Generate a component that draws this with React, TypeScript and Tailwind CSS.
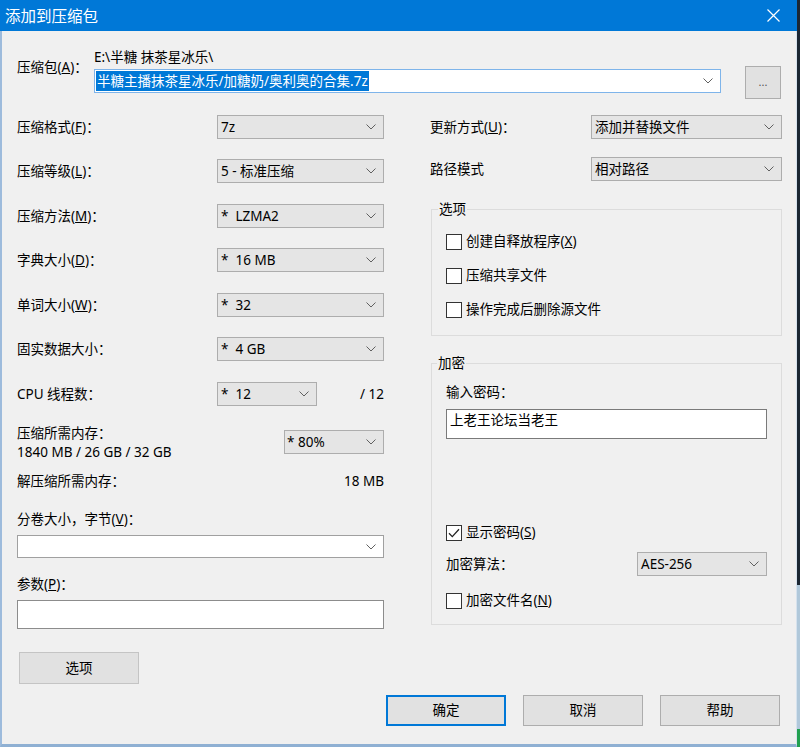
import React from "react";

function Chevron() {
  return (
    <svg width="10" height="6" viewBox="0 0 10 6" className="shrink-0">
      <path d="M0.5 0.5 L5 5 L9.5 0.5" fill="none" stroke="#606060" strokeWidth="1" />
    </svg>
  );
}

function Select({ value, star, className }: { value: string; star?: boolean; className: string }) {
  return (
    <div
      className={`flex h-[24px] items-center justify-between border border-[#adadad] bg-[#e5e5e5] pl-[3px] pr-[7px] ${className}`}
    >
      <span className="whitespace-pre leading-[19px]">
        {star && <span className="mr-[7px]">*</span>}
        {value}
      </span>
      <Chevron />
    </div>
  );
}

function Check({ checked }: { checked?: boolean }) {
  return (
    <div className="flex h-[16px] w-[16px] shrink-0 items-center justify-center border border-[#333] bg-white">
      {checked && (
        <svg width="14" height="14" viewBox="0 0 14 14">
          <path d="M2 7.2 L5.3 10.6 L12 3.2" fill="none" stroke="#222" strokeWidth="1.3" />
        </svg>
      )}
    </div>
  );
}

function Btn({ label, primary, className }: { label: string; primary?: boolean; className?: string }) {
  return (
    <div
      className={`flex h-[31px] w-[120px] items-center justify-center bg-[#e1e1e1] ${
        primary ? "border-2 border-[#0078d7]" : "border border-[#adadad]"
      } ${className ?? ""}`}
    >
      {label}
    </div>
  );
}

const leftRows = [
  { label: "压缩格式(", key: "F", tail: ")：", value: "7z", star: false, mt: "mt-0" },
  { label: "压缩等级(", key: "L", tail: ")：", value: "5 - 标准压缩", star: false, mt: "mt-[20px]" },
  { label: "压缩方法(", key: "M", tail: ")：", value: "LZMA2", star: true, mt: "mt-[21px]" },
  { label: "字典大小(", key: "D", tail: ")：", value: "16 MB", star: true, mt: "mt-[20px]" },
  { label: "单词大小(", key: "W", tail: ")：", value: "32", star: true, mt: "mt-[21px]" },
  { label: "固实数据大小：", key: "", tail: "", value: "4 GB", star: true, mt: "mt-[20px]" },
];

export default function App() {
  return (
    <div className="flex h-[747px] w-[800px] overflow-hidden bg-[#1b2530] font-['Noto_Sans','Noto_Sans_CJK_SC',sans-serif] text-[13.5px] text-black">
      {/* Dialog */}
      <div className="flex w-[797px] flex-col bg-[#f0f0f0]">
        {/* Title bar */}
        <div className="flex h-[31px] shrink-0 items-center justify-between bg-[#0078d7] pl-[5px] pr-[17px] text-white">
          <span className="text-[15.5px] leading-[20px]">添加到压缩包</span>
          <svg width="13" height="13" viewBox="0 0 13 13">
            <path d="M0.5 0.5 L12.5 12.5 M12.5 0.5 L0.5 12.5" stroke="#fff" strokeWidth="1.2" />
          </svg>
        </div>

        {/* Body */}
        <div className="flex flex-1 flex-col border-b-[3px] border-l-2 border-r border-b-[#8fb0d3] border-l-[#9dbbdc] border-r-[#d6e2ee] pl-[15px] pt-[18px]">
          {/* Archive path */}
          <div className="flex items-start">
            <div className="mt-[10px] w-[77px] leading-[16px]">
              压缩包(<span className="underline">A</span>)：
            </div>
            <div className="flex w-[627px] flex-col">
              <div className="h-[16px] leading-[16px]">E:\半糖 抹茶星冰乐\</div>
              <div className="mt-[4px] flex h-[24px] items-center justify-between border border-[#7eb4ea] bg-white pl-[1px] pr-[7px]">
                <span className="bg-[#0078d7] px-[1px] leading-[20px] text-white">
                  半糖主播抹茶星冰乐/加糖奶/奥利奥的合集.7z
                </span>
                <Chevron />
              </div>
            </div>
            <div className="ml-[24px] mt-[17px] flex h-[33px] w-[36px] items-center justify-center border border-[#adadad] bg-[#e1e1e1] text-[11px] text-[#555]">
              ...
            </div>
          </div>

          {/* Two columns */}
          <div className="mt-[16px] flex">
            {/* Left column */}
            <div className="flex w-[367px] flex-col">
              {leftRows.map((r) => (
                <div key={r.label} className={`flex h-[24px] items-center ${r.mt}`}>
                  <div className="w-[200px] leading-[19px]">
                    {r.label}
                    {r.key && <span className="underline">{r.key}</span>}
                    {r.tail}
                  </div>
                  <Select value={r.value} star={r.star} className="w-[167px]" />
                </div>
              ))}
              <div className="mt-[21px] flex h-[24px] items-center">
                <div className="w-[200px] leading-[19px]">CPU 线程数：</div>
                <Select value="12" star className="w-[100px]" />
                <div className="flex-1 text-right leading-[19px]">/ 12</div>
              </div>

              <div className="mt-[18px] flex">
                <div className="flex flex-1 flex-col leading-[19px]">
                  <div>压缩所需内存：</div>
                  <div>1840 MB / 26 GB / 32 GB</div>
                </div>
                <div className="mt-[6px] flex h-[24px] w-[100px] items-center justify-between border border-[#adadad] bg-[#e5e5e5] pl-[2px] pr-[7px]">
                  <span className="leading-[19px]">* 80%</span>
                  <Chevron />
                </div>
              </div>

              <div className="mt-[10px] flex justify-between leading-[19px]">
                <span>解压缩所需内存：</span>
                <span>18 MB</span>
              </div>

              <div className="mt-[19px] leading-[19px]">
                分卷大小，字节(<span className="underline">V</span>)：
              </div>
              <div className="mt-[6px] flex h-[23px] items-center justify-end border border-[#a0a0a0] bg-white pr-[7px]">
                <Chevron />
              </div>

              <div className="mt-[17px] leading-[19px]">
                参数(<span className="underline">P</span>)：
              </div>
              <div className="mt-[6px] h-[29px] border border-[#8c8c8c] bg-white" />

              <div className="mt-[23px] ml-[2px] flex h-[32px] w-[120px] items-center justify-center border border-[#c4c4c4] bg-[#e1e1e1]">
                选项
              </div>
            </div>

            {/* Right column */}
            <div className="ml-[46px] flex w-[352px] flex-col">
              <div className="flex h-[24px] items-center">
                <div className="w-[161px] leading-[19px]">
                  更新方式(<span className="underline">U</span>)：
                </div>
                <Select value="添加并替换文件" className="w-[191px]" />
              </div>
              <div className="mt-[18px] flex h-[24px] items-center">
                <div className="w-[161px] leading-[19px]">路径模式</div>
                <Select value="相对路径" className="w-[191px]" />
              </div>

              <fieldset className="ml-[1px] mt-[19px] w-[351px] border border-[#dcdcdc]">
                <legend className="ml-[6px] px-[1px] leading-[19px]">选项</legend>
                <div className="flex flex-col gap-[15px] px-[14px] pb-[16px] pt-[13px]">
                  <div className="flex h-[19px] items-center gap-[4px]">
                    <Check />
                    <span className="leading-[19px]">
                      创建自释放程序(<span className="underline">X</span>)
                    </span>
                  </div>
                  <div className="flex h-[19px] items-center gap-[4px]">
                    <Check />
                    <span className="leading-[19px]">压缩共享文件</span>
                  </div>
                  <div className="flex h-[19px] items-center gap-[4px]">
                    <Check />
                    <span className="leading-[19px]">操作完成后删除源文件</span>
                  </div>
                </div>
              </fieldset>

              <fieldset className="ml-[1px] mt-[18px] w-[351px] border border-[#dcdcdc]">
                <legend className="ml-[5px] px-[1px] leading-[19px]">加密</legend>
                <div className="flex flex-col px-[14px] pb-[14px]">
                  <div className="mt-[10px] leading-[19px]">输入密码：</div>
                  <div className="mt-[7px] h-[30px] border border-[#7a7a7a] bg-white pl-[3px] pt-[1px] leading-[19px]">
                    上老王论坛当老王
                  </div>
                  <div className="mt-[84px] flex h-[19px] items-center gap-[4px]">
                    <Check checked />
                    <span className="leading-[19px]">
                      显示密码(<span className="underline">S</span>)
                    </span>
                  </div>
                  <div className="mt-[10px] flex h-[24px] items-center justify-between">
                    <span className="leading-[19px]">加密算法：</span>
                    <Select value="AES-256" className="w-[130px]" />
                  </div>
                  <div className="mt-[15px] flex h-[19px] items-center gap-[4px]">
                    <Check />
                    <span className="leading-[19px]">
                      加密文件名(<span className="underline">N</span>)
                    </span>
                  </div>
                </div>
              </fieldset>
            </div>
          </div>

          {/* Dialog buttons */}
          <div className="mt-[11px] flex gap-[17px] pl-[369px]">
            <Btn label="确定" primary />
            <Btn label="取消" />
            <Btn label="帮助" />
          </div>
        </div>
      </div>

      {/* Desktop strip on the right */}
      <div className="flex w-[3px] flex-col">
        <div className="h-[585px] bg-[#1c2733]" />
        <div className="flex-1 bg-[#b0c8da]" />
        <div className="h-[18px] bg-[#22a050]" />
      </div>
    </div>
  );
}
